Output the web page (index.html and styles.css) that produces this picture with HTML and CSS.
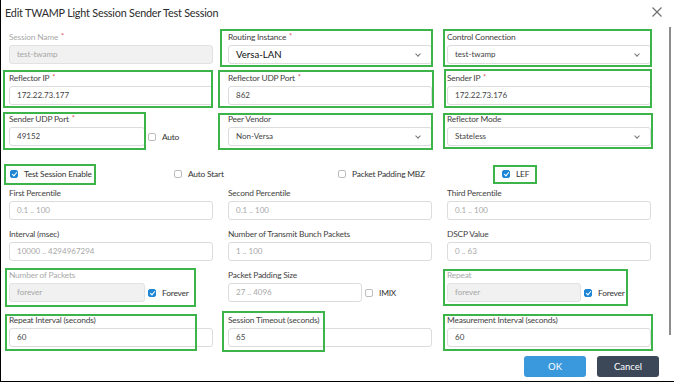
FILE: index.html
```html
<!DOCTYPE html>
<html>
<head>
<meta charset="utf-8">
<link rel="stylesheet" href="styles.css">
</head>
<body>
<div class="dialog">
  <header class="head">
    <h1 class="title">Edit TWAMP Light Session Sender Test Session</h1>
    <svg class="close" width="10" height="10" viewBox="0 0 10 10"><path d="M0.5 0.5L9.5 9.5M9.5 0.5L0.5 9.5" stroke="#6b6b6b" stroke-width="1.1" fill="none"/></svg>
  </header>
  <div class="body">
    <div class="grid3">
      <div class="field">
        <label class="lbl dis">Session Name <span class="req">*</span></label>
        <div class="inp disabled">test-twamp</div>
      </div>
      <div class="field hl hl-ri">
        <label class="lbl">Routing Instance <span class="req">*</span></label>
        <div class="inp sel big">Versa-LAN<span class="chev"></span></div>
      </div>
      <div class="field hl hl-cc">
        <label class="lbl">Control Connection</label>
        <div class="inp sel">test-twamp<span class="chev"></span></div>
      </div>

      <div class="field hl hl-rip">
        <label class="lbl">Reflector IP <span class="req">*</span></label>
        <div class="inp">172.22.73.177</div>
      </div>
      <div class="field hl hl-rup">
        <label class="lbl">Reflector UDP Port <span class="req">*</span></label>
        <div class="inp">862</div>
      </div>
      <div class="field hl hl-sip">
        <label class="lbl">Sender IP <span class="req">*</span></label>
        <div class="inp">172.22.73.176</div>
      </div>

      <div class="field hl hl-sup">
        <label class="lbl">Sender UDP Port <span class="req">*</span></label>
        <div class="inline">
          <div class="inp w136">49152</div>
          <span class="chk"><span class="box"></span><span class="chk-t">Auto</span></span>
        </div>
      </div>
      <div class="field hl hl-pv">
        <label class="lbl">Peer Vendor</label>
        <div class="inp sel">Non-Versa<span class="chev"></span></div>
      </div>
      <div class="field hl hl-rm">
        <label class="lbl">Reflector Mode</label>
        <div class="inp sel">Stateless<span class="chev"></span></div>
      </div>
    </div>

    <div class="checks">
      <span class="chk hl hl-tse"><span class="box on"></span><span class="chk-t">Test Session Enable</span></span>
      <span class="chk"><span class="box"></span><span class="chk-t">Auto Start</span></span>
      <span class="chk"><span class="box"></span><span class="chk-t">Packet Padding MBZ</span></span>
      <span class="chk hl hl-lef"><span class="box on"></span><span class="chk-t">LEF</span></span>
    </div>

    <div class="grid3">
      <div class="field">
        <label class="lbl">First Percentile</label>
        <div class="inp ph">0.1 .. 100</div>
      </div>
      <div class="field">
        <label class="lbl">Second Percentile</label>
        <div class="inp ph">0.1 .. 100</div>
      </div>
      <div class="field">
        <label class="lbl">Third Percentile</label>
        <div class="inp ph">0.1 .. 100</div>
      </div>

      <div class="field">
        <label class="lbl">Interval (msec)</label>
        <div class="inp ph">10000 .. 4294967294</div>
      </div>
      <div class="field">
        <label class="lbl">Number of Transmit Bunch Packets</label>
        <div class="inp ph">1 .. 100</div>
      </div>
      <div class="field">
        <label class="lbl">DSCP Value</label>
        <div class="inp ph">0 .. 63</div>
      </div>

      <div class="field hl hl-nop">
        <label class="lbl dis">Number of Packets</label>
        <div class="inline">
          <div class="inp disabled w136">forever</div>
          <span class="chk"><span class="box on"></span><span class="chk-t">Forever</span></span>
        </div>
      </div>
      <div class="field">
        <label class="lbl">Packet Padding Size</label>
        <div class="inline">
          <div class="inp ph w134">27 .. 4096</div>
          <span class="chk"><span class="box"></span><span class="chk-t">IMIX</span></span>
        </div>
      </div>
      <div class="field hl hl-rep">
        <label class="lbl dis">Repeat</label>
        <div class="inline">
          <div class="inp disabled w134">forever</div>
          <span class="chk"><span class="box on"></span><span class="chk-t">Forever</span></span>
        </div>
      </div>

      <div class="field last hl hl-ri2">
        <label class="lbl">Repeat Interval (seconds)</label>
        <div class="inp">60</div>
      </div>
      <div class="field last hl hl-st">
        <label class="lbl">Session Timeout (seconds)</label>
        <div class="inp">65</div>
      </div>
      <div class="field last hl hl-mi">
        <label class="lbl">Measurement Interval (seconds)</label>
        <div class="inp">60</div>
      </div>
    </div>
  </div>
  <footer class="foot">
    <button class="btn ok">OK</button>
    <button class="btn cancel">Cancel</button>
  </footer>
  <div class="scrollbar"></div>
</div>
</body>
</html>
```

FILE: styles.css
```css
* { box-sizing: border-box; }
html, body { margin: 0; padding: 0; background: #fff; }
body { font-family: Lato, "Open Sans", sans-serif; color: #333; }

.dialog {
  position: relative;
  width: 674px;
  height: 382px;
  border-left: 1px solid #000;
  border-bottom: 1px solid #000;
  overflow: hidden;
}

.head {
  display: flex;
  align-items: center;
  justify-content: space-between;
  height: 25px;
  padding: 0 12px 0 4px;
}
.title {
  margin: 0;
  font-size: 10.8px;
  font-weight: 400;
  color: #2b2b2b;
  letter-spacing: -0.2px;
}
.close { display: block; margin-top: -2px; }

.body { padding: 6px 0 0 8px; }

.grid3 {
  display: grid;
  grid-template-columns: 204px 204px 204px;
  column-gap: 15px;
  row-gap: 8px;
}

.field { position: relative; display: flex; flex-direction: column; }
.field.last { margin-top: 4px; }

.lbl {
  display: block;
  height: 12px;
  line-height: 12px;
  font-size: 8.4px;
  letter-spacing: -0.2px;
  color: #3f3f3f;
  margin-bottom: 2px;
  white-space: nowrap;
}
.lbl.dis { color: #aaa; }
.req { color: #e05a5a; font-size: 7.5px; position: relative; top: -1px; margin-left: 1px; }

.inp {
  position: relative;
  height: 19px;
  line-height: 17px;
  border: 1px solid #dcdcdc;
  border-radius: 3px;
  padding: 0 7px;
  font-size: 8px;
  color: #444;
  background: #fff;
}
.inp.ph { color: #a8a8a8; }
.inp.disabled { background: #f1f1f1; color: #a5a5a5; border-color: #e2e2e2; }
.inp.big { font-size: 9.6px; color: #0f0f0f; }
.inp.w136 { width: 136px; flex: none; }
.inp.w134 { width: 134px; flex: none; }

.chev {
  position: absolute;
  right: 11px;
  top: 6px;
  width: 4px;
  height: 4px;
  border-right: 1px solid #777;
  border-bottom: 1px solid #777;
  transform: rotate(45deg);
}

.inline { display: flex; align-items: center; }
.inline .chk { margin-left: 3px; }

.chk { display: inline-flex; align-items: center; position: relative; justify-self: start; }
.box {
  width: 8px;
  height: 8px;
  border: 1px solid #bdbdbd;
  border-radius: 2px;
  background: #fff;
  position: relative;
  flex: none;
}
.box.on { background: #1f86d6; border-color: #1f86d6; }
.box.on::after {
  content: "";
  position: absolute;
  left: 2px;
  top: 0px;
  width: 2px;
  height: 4px;
  border-right: 1px solid #fff;
  border-bottom: 1px solid #fff;
  transform: rotate(40deg);
}
.chk-t { margin-left: 6px; font-size: 8.4px; letter-spacing: -0.2px; color: #333; white-space: nowrap; }

.checks {
  display: grid;
  grid-template-columns: repeat(4, 164px);
  height: 12px;
  align-items: center;
  margin: 22px 0 7px 1px;
}

/* green annotation boxes */
.hl::after {
  content: "";
  position: absolute;
  border: 2px solid #3cb44a;
  pointer-events: none;
  top: var(--t);
  bottom: var(--b);
  left: var(--l);
  right: var(--r);
}
.hl-ri  { --t: -2px; --b: -3px; --l: -8px; --r: -1px; }
.hl-cc  { --t: -2px; --b: -3px; --l: -4px; --r: -1px; }
.hl-rip { --t: -2px; --b: -3px; --l: -6px; --r: 0px; }
.hl-rup { --t: -2px; --b: -3px; --l: -10px; --r: -2px; }
.hl-sip { --t: -3px; --b: -3px; --l: -3px; --r: -1px; }
.hl-sup { --t: -1px; --b: -4px; --l: -6px; --r: 67px; }
.hl-pv  { --t: 0px; --b: -4px; --l: -10px; --r: -1px; }
.hl-rm  { --t: 0px; --b: -3px; --l: -4px; --r: -2px; }
.hl-tse { --t: -5px; --b: -6px; --l: -6px; --r: -4px; }
.hl-lef { --t: -4px; --b: -5px; --l: -9px; --r: -8px; }
.hl-nop { --t: -1px; --b: -5px; --l: -4px; --r: 17px; }
.hl-rep { --t: 0px; --b: -4px; --l: -4px; --r: 23px; }
.hl-ri2 { --t: 0px; --b: -4px; --l: -4px; --r: 16px; }
.hl-st  { --t: -3px; --b: -5px; --l: -6px; --r: 107px; }
.hl-mi  { --t: 0px; --b: -4px; --l: -4px; --r: -2px; }

.foot {
  display: flex;
  justify-content: flex-end;
  gap: 11px;
  padding: 9px 15px 0 0;
}
.btn {
  width: 62px;
  height: 21px;
  border: none;
  border-radius: 3px;
  font-family: Lato, sans-serif;
  font-size: 9.5px;
  color: #fff;
  padding: 0;
}
.btn.ok { background: #3a98dc; }
.btn.cancel { background: #3c4858; }

.scrollbar {
  position: absolute;
  right: 3px;
  top: 27px;
  width: 2px;
  height: 308px;
  background: #8c8c8c;
}
```
